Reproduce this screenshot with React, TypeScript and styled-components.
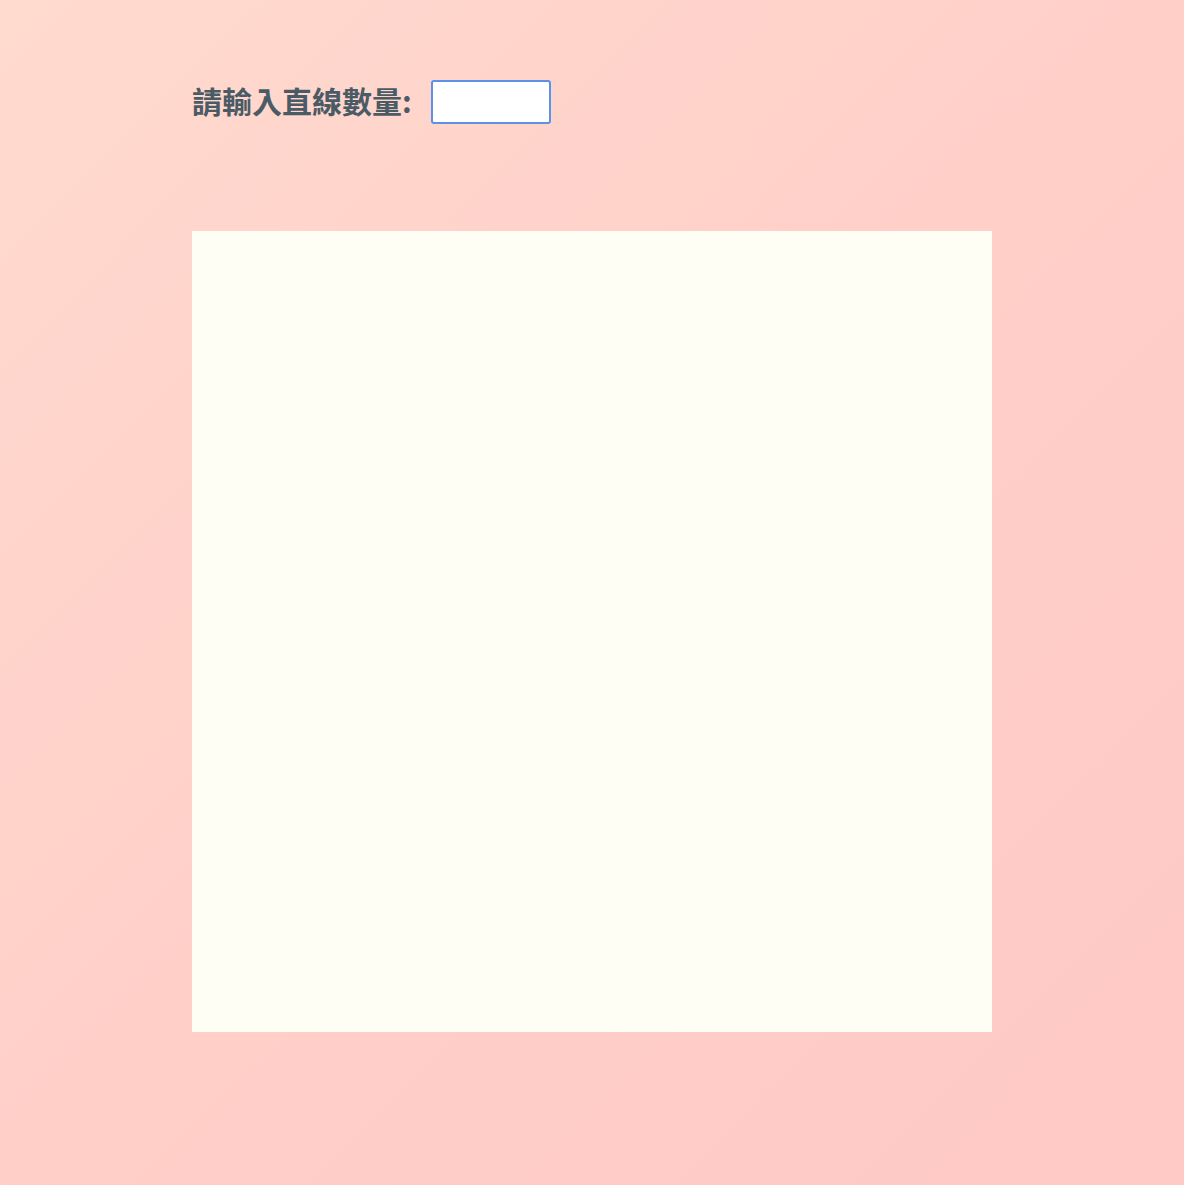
import React from "react";
import styled, { createGlobalStyle } from "styled-components";

const GlobalStyle = createGlobalStyle`
  html, body { margin: 0; padding: 0; }
  body { font-family: "Noto Sans CJK TC", "Noto Sans", sans-serif; }
`;

const Page = styled.div`
  min-height: 1185px;
  background: linear-gradient(135deg, #ffdacf 0%, #ffcfc8 50%, #ffc9c5 100%);
  box-sizing: border-box;
  padding-top: 80px;
`;

const Wrapper = styled.div`
  width: 800px;
  margin: 0 auto;
  display: flex;
  flex-direction: column;
  gap: 107px;
`;

const Controls = styled.div`
  display: flex;
  align-items: center;
  gap: 19px;
  height: 44px;
`;

const Label = styled.label`
  font-family: "Noto Sans CJK TC", "Noto Sans", sans-serif;
  font-weight: 700;
  font-size: 30px;
  line-height: 1.2;
  padding-bottom: 4px;
  color: #4b5b66;
`;

const NumberInput = styled.input`
  box-sizing: border-box;
  width: 120px;
  height: 44px;
  border: 2px solid #5b91e8;
  border-radius: 3px;
  background: #ffffff;
  outline: none;
  font-size: 20px;
  text-align: right;
  padding: 0 4px;
  caret-color: #000;
`;

const Canvas = styled.div`
  width: 800px;
  height: 801px;
  background: #fffef4;
`;

export default function App() {
  return (
    <>
      <GlobalStyle />
      <Page>
        <Wrapper>
          <Controls>
            <Label htmlFor="lines">請輸入直線數量:</Label>
            <NumberInput id="lines" type="text" autoFocus />
          </Controls>
          <Canvas />
        </Wrapper>
      </Page>
    </>
  );
}
